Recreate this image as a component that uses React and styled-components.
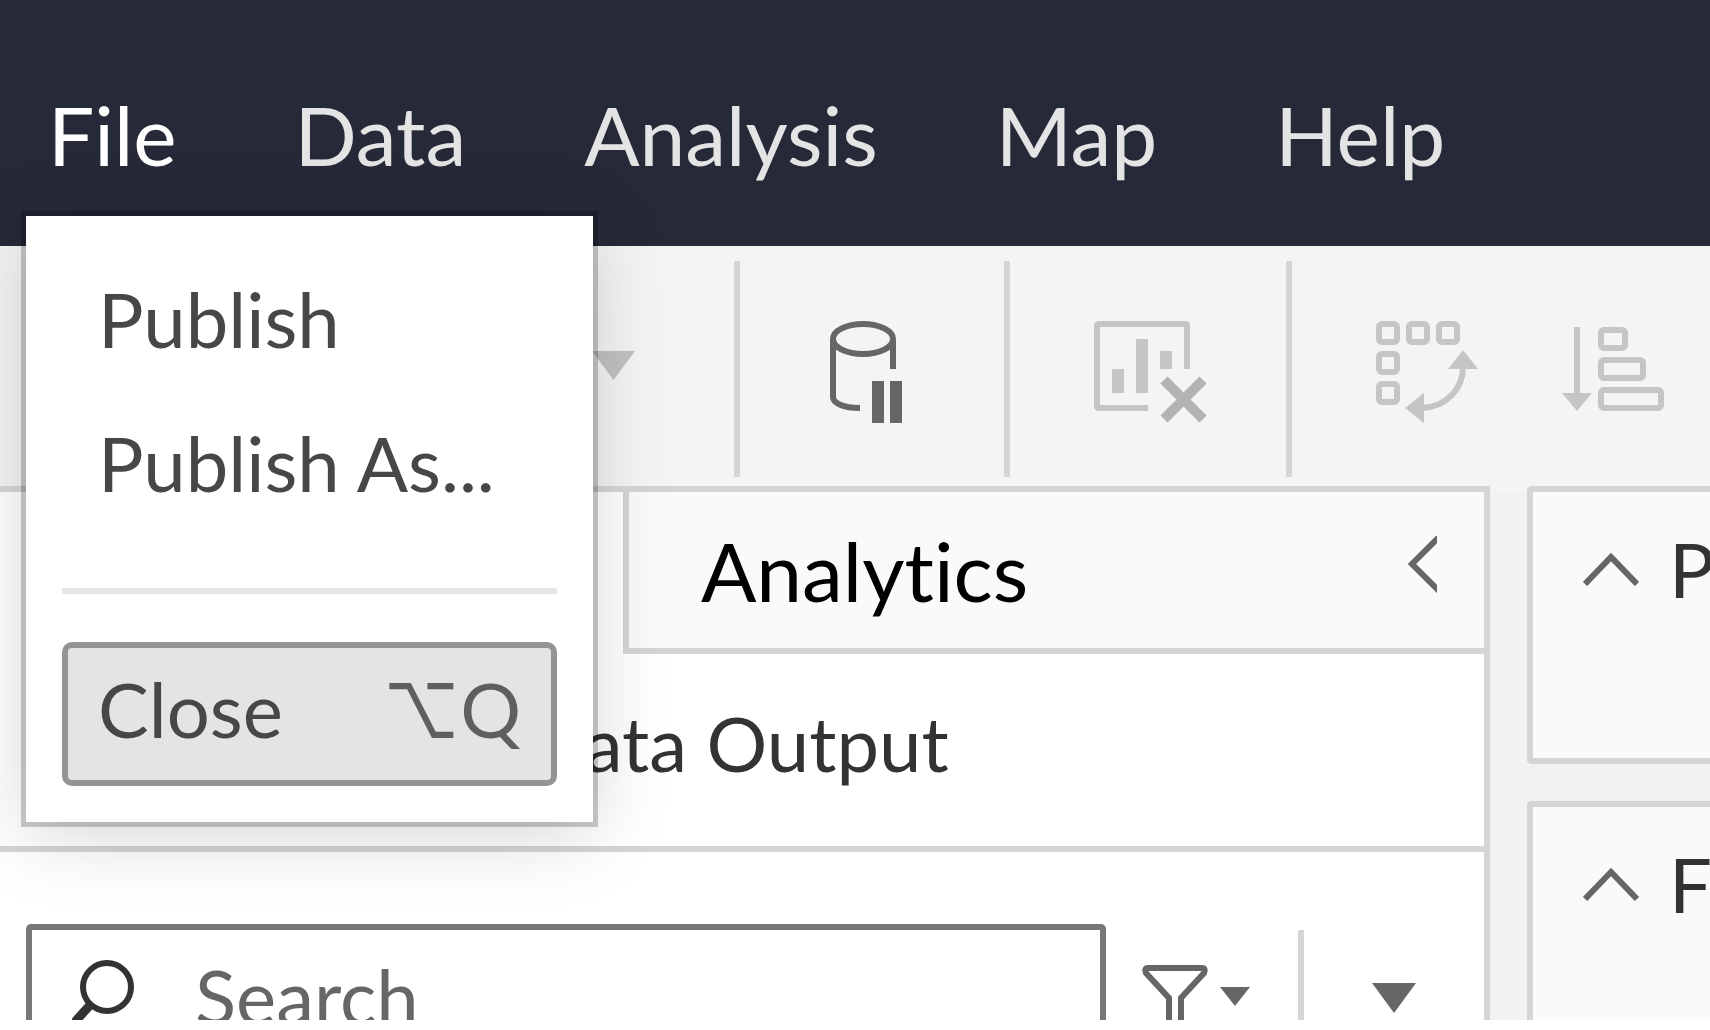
import React from "react";
import styled, { createGlobalStyle } from "styled-components";

const GlobalStyle = createGlobalStyle`
  * { box-sizing: border-box; }
  body { margin: 0; background: #fff; }
  button, input { font: inherit; color: inherit; }
`;

const Page = styled.div`
  display: flex;
  flex-direction: column;
  height: calc(100vh - 10px);
  overflow: hidden;
  background: #f2f2f2;
  color: #333;
  font-family: Lato, "Liberation Sans", sans-serif;
  font-size: 76px;
  line-height: 90px;
  font-variant-ligatures: none;
`;

const Plain = styled.button`
  display: flex;
  align-items: center;
  padding: 0;
  border: 0;
  background: none;
  font-variant-ligatures: none;
`;

const Header = styled.header`
  flex: none;
  display: flex;
  align-items: center;
  gap: 118px;
  height: 246px;
  padding: 22px 48px 0;
  background: #262938;
`;

const MenuSlot = styled.div`
  position: relative;
`;

const MenuButton = styled(Plain)`
  color: ${(p) => (p.$active ? "#fff" : "#e4e4e4")};
  font-size: 82px;
  line-height: 96px;
`;

const Menu = styled.div`
  position: absolute;
  z-index: 2;
  top: 130px;
  left: -22px;
  width: 567px;
  padding: 36px;
  background: #fff;
  box-shadow: 0 0 0 5px rgba(0, 0, 0, 0.2), 0 12px 72px rgba(0, 0, 0, 0.17);
`;

const MenuItem = styled(Plain)`
  justify-content: space-between;
  width: 100%;
  height: 144px;
  padding: 0 30px 10px;
  border: 6px solid ${(p) => (p.$selected ? "#949494" : "transparent")};
  border-radius: 10px;
  background: ${(p) => (p.$selected ? "#e4e4e4" : "none")};
  color: #474747;
`;

const Shortcut = styled.kbd`
  font-family: Lato, Inter, "DejaVu Sans", sans-serif;
  color: #5f5f5f;
`;

const MenuRule = styled.hr`
  height: 6px;
  margin: 48px 0;
  border: 0;
  background: #e6e6e6;
`;

const Toolbar = styled.div`
  flex: none;
  display: flex;
  align-items: center;
  height: 246px;
  background: #f4f4f4;
`;

const ToolGroup = styled.div`
  flex: none;
  display: flex;
  justify-content: ${(p) => (p.$end ? "flex-end" : "flex-start")};
  gap: 84px;
  width: ${(p) => p.$width};
  padding: 0 ${(p) => (p.$end ? "99px" : "0")} 0 ${(p) => p.$indent || "0"};
`;

const Divider = styled.div`
  flex: none;
  width: 6px;
  height: 216px;
  background: #d5d5d5;
`;

const Workspace = styled.main`
  flex: 1;
  display: flex;
  gap: 37px;
  min-height: 0;
  margin-top: -6px;
`;

const Panel = styled.section`
  flex: 1;
  min-width: 0;
  border: 6px solid #d5d5d5;
  border-width: 6px 6px 0 0;
  background: #fff;
`;

const Tabs = styled.div`
  display: flex;
  height: 162px;
`;

const DataTab = styled(Plain)`
  width: 623px;
`;

const AnalyticsTab = styled.div`
  flex: 1;
  display: flex;
  align-items: center;
  justify-content: space-between;
  padding: 0 47px 0 72px;
  border: 6px solid #d5d5d5;
  border-width: 0 0 6px 6px;
  background: #fafafa;
`;

const TabLabel = styled(Plain)`
  color: #000;
  font-size: 82px;
  line-height: 96px;
`;

const SourceRow = styled.div`
  display: flex;
  align-items: center;
  height: 198px;
  padding: 0 0 14px 528px;
  border-bottom: 6px solid #d5d5d5;
  white-space: nowrap;
`;

const SearchRow = styled.div`
  display: flex;
  align-items: flex-start;
  padding: 72px 68px 0 26px;
`;

const SearchBox = styled.label`
  flex: 1;
  display: flex;
  align-items: center;
  gap: 57px;
  min-width: 0;
  height: 144px;
  padding: 0 40px;
  margin-right: 36px;
  border: 6px solid #777;
  border-radius: 5px;
`;

const SearchInput = styled.input`
  flex: 1;
  min-width: 0;
  padding: 0;
  border: 0;
  outline: 0;
  background: none;
  &::placeholder { color: #666; opacity: 1; }
`;

const RowButton = styled(Plain)`
  gap: 12px;
  height: 148px;
`;

const RowDivider = styled.div`
  width: 6px;
  height: 138px;
  margin: 6px 68px 0 48px;
  background: #d5d5d5;
`;

const Shelves = styled.aside`
  flex: none;
  display: flex;
  flex-direction: column;
  gap: 37px;
  width: 183px;
`;

const Shelf = styled.section`
  flex: none;
  height: 278px;
  overflow: hidden;
  border: 6px solid #d5d5d5;
  border-right: 0;
  border-radius: 5px 0 0 5px;
  background: #fafafa;
`;

const ShelfToggle = styled(Plain)`
  gap: 30px;
  padding: 32px 0 0 50px;
  color: #333;
`;

const Icon = styled.svg`
  flex: none;
  display: block;
  fill: none;
  stroke-width: 6px;
`;

const HeavyStroke = styled.path`
  stroke-width: ${(p) => p.$weight}px;
`;

const ToolIcon = ({ width, color, children }) => (
  <Icon width={width} height="108" viewBox={`0 -6 ${width} 108`} stroke={color}>
    {children}
  </Icon>
);

const ChevronUp = () => (
  <Icon width="56" height="34" viewBox="0 0 56 34" stroke="#666">
    <path d="M2 32 28 5l26 27" />
  </Icon>
);

export default function App() {
  return (
    <Page>
      <GlobalStyle />
      <Header>
        <MenuSlot>
          <MenuButton $active aria-expanded="true">File</MenuButton>
          <Menu role="menu">
            <MenuItem role="menuitem">Publish</MenuItem>
            <MenuItem role="menuitem">Publish As...</MenuItem>
            <MenuRule />
            <MenuItem role="menuitem" $selected>
              Close <Shortcut>⌥Q</Shortcut>
            </MenuItem>
          </Menu>
        </MenuSlot>
        <MenuButton>Data</MenuButton>
        <MenuButton>Analysis</MenuButton>
        <MenuButton>Map</MenuButton>
        <MenuButton>Help</MenuButton>
      </Header>

      <Toolbar role="toolbar">
        <ToolGroup $width="734px" $end>
          <Plain aria-label="More options">
            <ToolIcon width={43} color="none">
              <path d="M0 30h43L21.500 59z" fill="#c2c2c2" />
            </ToolIcon>
          </Plain>
        </ToolGroup>
        <Divider />
        <ToolGroup $width="264px" $indent="90px">
          <Plain aria-label="Pause auto updates">
            <ToolIcon width={72} color="#666">
              <ellipse cx="33" cy="18" rx="30" ry="15" />
              <path d="M3 18v58c0 6 10 11 27 11M63 18v30" />
              <path d="M42 60h12v42H42zM60 60h12v42H60z" fill="#666" stroke="none" />
            </ToolIcon>
          </Plain>
        </ToolGroup>
        <Divider />
        <ToolGroup $width="276px" $indent="84px">
          <Plain aria-label="Clear sheet">
            <ToolIcon width={114} color="#c5c5c5">
              <path d="M54 87H5q-2 0-2-2V5q0-2 2-2h86q2 0 2 2v43" />
              <path d="M18 48h12v24H18zM42 18h12v54H42zM66 30h12v18H66z" fill="#c5c5c5" stroke="none" />
              <HeavyStroke $weight={10} d="m70 59 39 39M109 59 70 98" stroke="#b3b3b3" />
            </ToolIcon>
          </Plain>
        </ToolGroup>
        <Divider />
        <ToolGroup $indent="84px">
          <Plain aria-label="Swap rows and columns">
            <ToolIcon width={102} color="#c5c5c5">
              {[[3, 3], [33, 3], [63, 3], [3, 33], [3, 63]].map(([x, y]) => (
                <rect key={`${x}-${y}`} x={x} y={y} width="18" height="18" rx="3" />
              ))}
              <path d="M87 46c0 22-17 40-41 41" />
              <path d="M72 48h30L87 29zM48 72v30L29 87z" fill="#c5c5c5" stroke="none" />
            </ToolIcon>
          </Plain>
          <Plain aria-label="Sort">
            <ToolIcon width={102} color="#c5c5c5">
              <path d="M15 6v68" />
              <path d="M0 72h30L15 90z" fill="#c5c5c5" stroke="none" />
              <rect x="39" y="9" width="24" height="18" rx="3" />
              <rect x="39" y="39" width="42" height="18" rx="3" />
              <rect x="39" y="69" width="60" height="18" rx="3" />
            </ToolIcon>
          </Plain>
        </ToolGroup>
      </Toolbar>

      <Workspace>
        <Panel>
          <Tabs>
            <DataTab aria-label="Data" />
            <AnalyticsTab>
              <TabLabel>Analytics</TabLabel>
              <Plain aria-label="Collapse panel">
                <Icon width="29" height="68" viewBox="0 0 29 68" stroke="#666">
                  <path d="M31 1 4 28l27 27" />
                </Icon>
              </Plain>
            </AnalyticsTab>
          </Tabs>
          <SourceRow>Data Output</SourceRow>
          <SearchRow>
            <SearchBox>
              <Icon width="66" height="72" viewBox="0 0 66 72" stroke="#333">
                <circle cx="35" cy="27" r="24" />
                <HeavyStroke $weight={9} d="M19 44 1 64" />
              </Icon>
              <SearchInput type="search" placeholder="Search" aria-label="Search" />
            </SearchBox>
            <RowButton aria-label="Filter fields">
              <Icon width="66" height="72" viewBox="0 0 66 72" stroke="#666">
                <path d="M27 72V36L4 11q-2-5 2-5h54q4 0 2 5L39 36v36" />
              </Icon>
              <Icon width="30" height="22" viewBox="0 0 30 22">
                <path d="M0 0h30L15 19z" fill="#666" />
              </Icon>
            </RowButton>
            <RowDivider />
            <RowButton aria-label="View options">
              <Icon width="44" height="30" viewBox="0 0 44 30">
                <path d="M0 0h44L22 30z" fill="#666" />
              </Icon>
            </RowButton>
          </SearchRow>
        </Panel>
        <Shelves>
          <Shelf>
            <ShelfToggle><ChevronUp />Pages</ShelfToggle>
          </Shelf>
          <Shelf>
            <ShelfToggle><ChevronUp />Filters</ShelfToggle>
          </Shelf>
        </Shelves>
      </Workspace>
    </Page>
  );
}
